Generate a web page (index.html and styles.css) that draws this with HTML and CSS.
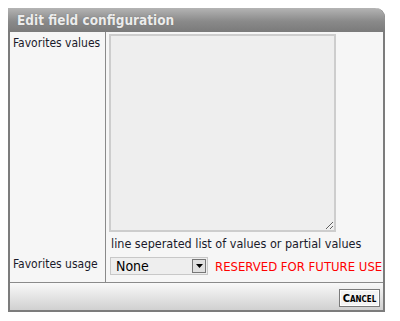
FILE: index.html
```
<!DOCTYPE html>
<html>
<head>
<meta charset="utf-8">
<link rel="stylesheet" href="styles.css">
</head>
<body>
<div class="dialog">
  <div class="header">Edit field configuration</div>
  <div class="form">
    <div class="label label-values">Favorites values</div>
    <div class="field field-values">
      <textarea class="values"></textarea>
      <div class="hint">line seperated list of values or partial values</div>
    </div>
    <div class="label label-usage">Favorites usage</div>
    <div class="field field-usage">
      <div class="select">
        <span class="select-text">None</span>
        <span class="select-btn"><svg width="7" height="4" viewBox="0 0 7 4"><path d="M0 0H7L3.5 4Z" fill="#000"/></svg></span>
      </div>
      <span class="reserved">RESERVED FOR FUTURE USE</span>
    </div>
  </div>
  <div class="footer">
    <button class="cancel">Cancel</button>
  </div>
</div>
</body>
</html>
```
FILE: styles.css
```
html, body { margin: 0; padding: 0; background: #fff; }
body { padding: 8px; font-family: "DejaVu Sans Condensed", "DejaVu Sans", sans-serif; }
.dialog {
  width: 373px;
  border: 2px solid #7c7c7c;
  border-top: none;
  border-radius: 0 9px 0 0;
  background: #f6f6f6;
}
.header {
  height: 24px;
  margin: 0 -2px;
  border-radius: 0 10px 0 0;
  background: linear-gradient(#b4b4b4, #8a8a8a 55%, #7a7a7a);
  color: #ececec;
  font-weight: bold;
  font-size: 13.5px;
  line-height: 24px;
  padding-left: 9px;
  text-shadow: 0 0 1px #666;
  font-family: "DejaVu Sans Condensed", sans-serif;
}
.form {
  display: grid;
  grid-template-columns: 96px 1fr;
  height: 250px;
  grid-template-rows: 220px 30px;
}
.label {
  border-right: 1px solid #8a8a8a;
  font-size: 12px;
  color: #1a1a2a;
  padding-left: 3px;
}
.label-values { padding-top: 4px; }
.label-usage { padding-top: 5px; }
.field { padding-left: 3px; }
.field-values { padding-top: 2px; display: flex; flex-direction: column; }
.values {
  display: block;
  width: 227px;
  height: 198px;
  box-sizing: border-box;
  margin: 0;
  background: #eeeeee;
  border: 2px solid #cdcdcd;
  resize: vertical;
}
.hint {
  font-size: 12.5px;
  color: #1a1a2a;
  padding-left: 2px;
  margin-top: 4px;
}
.field-usage { display: flex; align-items: center; gap: 7px; padding-left: 4px; padding-bottom: 2px; }
.select {
  width: 98px;
  height: 18px;
  box-sizing: border-box;
  border: 1px solid #c8c8c8;
  background: #eeeeee;
  display: flex;
  align-items: center;
  justify-content: space-between;
}
.select-text { font-size: 14px; padding-left: 5px; color: #000; }
.select-btn {
  width: 14px; height: 14px;
  margin-right: 1px;
  box-sizing: border-box;
  border: 1px solid #777;
  background: #e0e0e0;
  display: flex; align-items: center; justify-content: center;
}
.reserved { color: #ff0000; font-size: 13px; }
.footer {
  height: 27px;
  border-top: 1px solid #8a8a8a;
  background: linear-gradient(#f9f9f9, #d0d0d0);
  display: flex;
  justify-content: flex-end;
  align-items: center;
  padding-right: 3px;
}
.cancel {
  font-family: "DejaVu Sans Condensed", sans-serif;
  font-variant: small-caps;
  font-weight: bold;
  font-size: 11px;
  color: #000;
  background: #f4f4f4;
  border: 1px solid #7a7a7a;
  box-shadow: inset 0 0 0 1px #fff;
  height: 18px;
  width: 41px;
  padding: 0;
  margin-top: 3px;
}
```
